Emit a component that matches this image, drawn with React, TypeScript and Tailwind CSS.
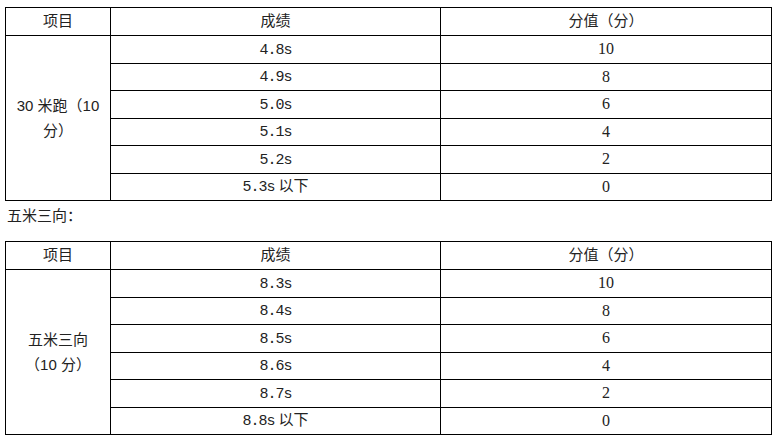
import React from "react";

const cjk = { fontFamily: '"Liberation Sans", "Noto Sans CJK SC", sans-serif' };
const mono = { fontFamily: '"Liberation Mono", "Noto Sans CJK SC", monospace' };
const serif = { fontFamily: '"Liberation Serif", "Noto Sans CJK SC", serif' };

function ScoreTable({ label, rows }: { label: React.ReactNode; rows: [string, string, string][] }) {
  return (
    <table className="ml-[5px] w-[766px] table-fixed border-collapse text-[15px] text-[#222]">
      <colgroup>
        <col className="w-[105px]" />
        <col className="w-[330px]" />
        <col className="w-[331px]" />
      </colgroup>
      <tbody>
        <tr className="h-[28px]">
          <td className="border border-black p-0 text-center align-middle" style={cjk}>项目</td>
          <td className="border border-black p-0 text-center align-middle" style={cjk}>成绩</td>
          <td className="border border-black p-0 text-center align-middle" style={cjk}>分值（分）</td>
        </tr>
        {rows.map(([t, suffix, v], i) => (
          <tr key={i} className="h-[27.5px]">
            {i === 0 && (
              <td
                rowSpan={rows.length}
                className="border border-black p-0 text-center align-middle leading-[25px]"
                style={cjk}
              >
                {label}
              </td>
            )}
            <td className="border border-black p-0 text-center align-middle">
              <span className="text-[15px] tracking-[-1px]" style={mono}>{t}</span>
              {suffix && <span className="text-[15px]" style={cjk}> {suffix}</span>}
            </td>
            <td className="border border-black p-0 text-center align-middle text-[16px]" style={serif}>
              {v}
            </td>
          </tr>
        ))}
      </tbody>
    </table>
  );
}

export default function App() {
  return (
    <div className="h-[441px] w-[777px] overflow-hidden bg-white pt-[7px]">
      <ScoreTable
        label={
          <>
            30 米跑（10
            <br />
            分）
          </>
        }
        rows={[
          ["4.8s", "", "10"],
          ["4.9s", "", "8"],
          ["5.0s", "", "6"],
          ["5.1s", "", "4"],
          ["5.2s", "", "2"],
          ["5.3s", "以下", "0"],
        ]}
      />
      <div className="h-[40px] pl-[7px] pt-[4px] text-[15px] leading-[22px] text-[#222]" style={cjk}>
        五米三向：
      </div>
      <ScoreTable
        label={
          <>
            五米三向
            <br />
            （10 分）
          </>
        }
        rows={[
          ["8.3s", "", "10"],
          ["8.4s", "", "8"],
          ["8.5s", "", "6"],
          ["8.6s", "", "4"],
          ["8.7s", "", "2"],
          ["8.8s", "以下", "0"],
        ]}
      />
    </div>
  );
}
